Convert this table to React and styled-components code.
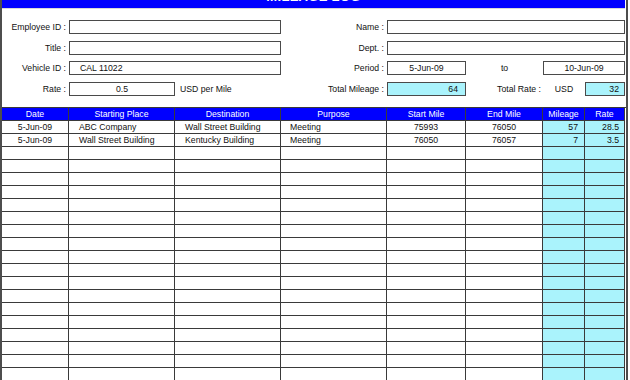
import React from 'react';
import styled, { createGlobalStyle } from 'styled-components';

const colors = {
    blue: '#0000ff',
    cyan: '#aaf3fc',
    line: '#3a3a3a',
    box: '#4a4a4a',
    frame: '#4d4d4d',
    text: '#111111',
};

const COLS = '67px 106px 106px 106px 79px 77px 42px 40px';

const GlobalStyle = createGlobalStyle`
    body {
        margin: 0;
        background: #ffffff;
        font-family: "Liberation Sans", Arial, sans-serif;
        color: ${colors.text};
    }
`;

const Sheet = styled.div`
    width: 624px;
    height: 380px;
    overflow: hidden;
    border-left: 2px solid ${colors.frame};
    border-right: 2px solid ${colors.frame};
    font-size: 8.7px;
`;

// the sheet is scrolled so only the foot of the title shows
const Banner = styled.div`
    height: 8px;
    width: 623px;
    background: ${colors.blue};
    overflow: hidden;
    text-align: center;
    border-bottom: 1px solid #d8d8d8;

    span {
        display: inline-block;
        color: #ffffff;
        font-weight: bold;
        font-size: 13px;
        line-height: 8px;
        transform: translateY(-7px);
        letter-spacing: 0.3px;
    }
`;

const Form = styled.div`
    display: grid;
    grid-template-columns: ${COLS};
    grid-auto-rows: 14px;
    row-gap: 6.7px;
    padding: 11px 0 11px;
`;

const Label = styled.div`
    grid-column: ${p => p.$col} / span ${p => p.$span || 1};
    align-self: center;
    text-align: ${p => p.$align || 'right'};
    padding: ${p => p.$pad || '0 3px 0 0'};
    white-space: nowrap;
`;

const Field = styled.div`
    grid-column: ${p => p.$col} / span ${p => p.$span || 1};
    border: 1px solid ${colors.box};
    background: ${p => (p.$hl ? colors.cyan : '#ffffff')};
    text-align: ${p => p.$align || 'left'};
    padding: ${p => p.$pad || '0 4px'};
    line-height: 12px;
    white-space: nowrap;
`;

const Table = styled.div`
    border-top: 1px solid ${colors.line};
`;

const Row = styled.div`
    display: grid;
    grid-template-columns: ${COLS};
    height: 13px;
`;

const Cell = styled.div`
    border-right: 1px solid ${colors.line};
    border-bottom: 1px solid ${colors.line};
    background: ${p => (p.$head ? colors.blue : p.$hl ? colors.cyan : '#ffffff')};
    color: ${p => (p.$head ? '#ffffff' : colors.text)};
    text-align: ${p => p.$align || 'center'};
    padding: ${p => p.$pad || '0'};
    line-height: 12px;
    white-space: nowrap;
    overflow: hidden;
`;

const headers = ['Date', 'Starting Place', 'Destination', 'Purpose', 'Start Mile', 'End Mile', 'Mileage', 'Rate'];

const trips = [
    ['5-Jun-09', 'ABC Company', 'Wall Street Building', 'Meeting', '75993', '76050', '57', '28.5'],
    ['5-Jun-09', 'Wall Street Building', 'Kentucky Building', 'Meeting', '76050', '76057', '7', '3.5'],
];

const cellProps = [
    { $align: 'center' },
    { $align: 'left', $pad: '0 0 0 10px' },
    { $align: 'left', $pad: '0 0 0 10px' },
    { $align: 'left', $pad: '0 0 0 9px' },
    { $align: 'center' },
    { $align: 'center' },
    { $align: 'right', $pad: '0 6px 0 0', $hl: true },
    { $align: 'right', $pad: '0 5px 0 0', $hl: true },
];

const App = () => {
    const rows = Array.from({ length: 20 }, (v, i) => trips[i] || Array(8).fill(''));

    return (
        <>
            <GlobalStyle />
            <Sheet>
                <Banner><span>MILEAGE LOG</span></Banner>
                <Form>
                    <Label $col={1}>Employee ID :</Label>
                    <Field $col={2} $span={2} />
                    <Label $col={4}>Name :</Label>
                    <Field $col={5} $span={4} />

                    <Label $col={1}>Title :</Label>
                    <Field $col={2} $span={2} />
                    <Label $col={4}>Dept. :</Label>
                    <Field $col={5} $span={4} />

                    <Label $col={1}>Vehicle ID :</Label>
                    <Field $col={2} $span={2} $pad="0 0 0 10px">CAL 11022</Field>
                    <Label $col={4}>Period :</Label>
                    <Field $col={5} $align="center">5-Jun-09</Field>
                    <Label $col={6} $align="center" $pad="0">to</Label>
                    <Field $col={7} $span={2} $align="center">10-Jun-09</Field>

                    <Label $col={1}>Rate :</Label>
                    <Field $col={2} $align="center">0.5</Field>
                    <Label $col={3} $align="left" $pad="0 0 0 5px">USD per Mile</Label>
                    <Label $col={4}>Total Mileage :</Label>
                    <Field $col={5} $hl $align="right" $pad="0 7px 0 0">64</Field>
                    <Label $col={6} $pad="0 2px 0 0">Total Rate :</Label>
                    <Label $col={7} $align="center" $pad="0">USD</Label>
                    <Field $col={8} $hl $align="right" $pad="0 5px 0 0">32</Field>
                </Form>
                <Table>
                    <Row>
                        {headers.map(h => (
                            <Cell $head key={h}>{h}</Cell>
                        ))}
                    </Row>
                    {rows.map((row, r) => (
                        <Row key={r}>
                            {row.map((value, c) => (
                                <Cell key={c} {...cellProps[c]}>{value}</Cell>
                            ))}
                        </Row>
                    ))}
                </Table>
            </Sheet>
        </>
    );
};

export default App;
